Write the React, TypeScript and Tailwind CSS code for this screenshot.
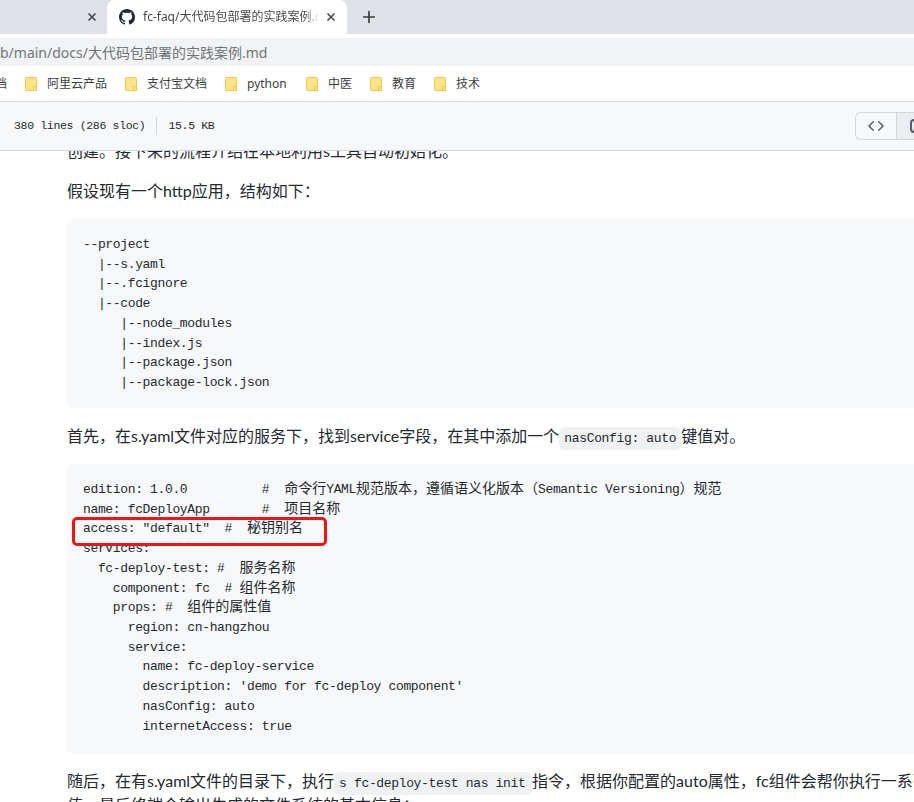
import React from "react";

const cjkRe = /([\u2E80-\u9FFF\uFF00-\uFFEF\u3000-\u303F]+)/;

function Mono({ text }: { text: string }) {
  return (
    <>
      {text.split(cjkRe).map((part, i) =>
        i % 2 === 1 ? (
          <span key={i} className="font-['Noto_Sans_CJK_SC',sans-serif] text-[14px] leading-[0] tracking-normal">
            {part}
          </span>
        ) : (
          <span key={i}>{part}</span>
        )
      )}
    </>
  );
}

function CodeBlock({ lines, className, children }: { lines: string[]; className: string; children?: React.ReactNode }) {
  return (
    <div className={`relative w-[900px] rounded-md bg-[#f6f8fa] px-4 pt-[16px] ${className}`}>
      <pre className="font-['Liberation_Mono',monospace] text-[13px] leading-[19.72px] tracking-[-0.35px] text-[#24292f]">
        {lines.map((l, i) => (
          <div key={i} className="h-[19.72px] whitespace-pre">
            <Mono text={l} />
          </div>
        ))}
      </pre>
      {children}
    </div>
  );
}

function InlineCode({ children, className }: { children: string; className: string }) {
  return (
    <code className={`inline-block rounded-md bg-[#eff1f3] px-[5px] align-baseline font-['Liberation_Mono',monospace] text-[13px] leading-[23px] tracking-[-0.35px] ${className}`}>
      {children}
    </code>
  );
}

function Folder() {
  return (
    <svg width="12" height="14" viewBox="0 0 12 14" className="shrink-0">
      <rect x="0.5" y="0.5" width="11" height="13" rx="1" fill="#fee38d" stroke="#efc94c" />
      <rect x="8.5" y="9.5" width="3" height="4" fill="#fee38d" stroke="#efc94c" />
    </svg>
  );
}

function Bookmark({ label, width }: { label: string; width: string }) {
  return (
    <div className={`flex items-center gap-[10px] ${width}`}>
      <Folder />
      <span className="whitespace-nowrap text-[12px] text-[#3c4043]">{label}</span>
    </div>
  );
}

function Close({ className }: { className: string }) {
  return (
    <svg width="10" height="10" viewBox="0 0 10 10" className={className}>
      <path d="M1.5 1.5l7 7M8.5 1.5l-7 7" stroke="#45484c" strokeWidth="1.6" />
    </svg>
  );
}

const projectLines = [
  "--project",
  "  |--s.yaml",
  "  |--.fcignore",
  "  |--code",
  "     |--node_modules",
  "     |--index.js",
  "     |--package.json",
  "     |--package-lock.json",
];

const yamlLines = [
  "edition: 1.0.0          #  命令行YAML规范版本，遵循语义化版本（Semantic Versioning）规范",
  "name: fcDeployApp       #  项目名称",
  'access: "default"  #  秘钥别名',
  "services:",
  "  fc-deploy-test: #  服务名称",
  "    component: fc  # 组件名称",
  "    props: #  组件的属性值",
  "      region: cn-hangzhou",
  "      service:",
  "        name: fc-deploy-service",
  "        description: 'demo for fc-deploy component'",
  "        nasConfig: auto",
  "        internetAccess: true",
];

export default function App() {
  return (
    <div className="flex h-[802px] w-[914px] flex-col overflow-hidden bg-white font-['Noto_Sans','Noto_Sans_CJK_SC',sans-serif]">
      <div className="flex h-[34px] shrink-0 bg-[#dee1e6]">
        <div className="flex w-[107px] shrink-0 items-center justify-end pr-[10px]">
          <Close className="mr-0" />
        </div>
        <div className="flex w-[240px] shrink-0 items-center rounded-t-lg bg-white pl-[12px] pr-[11px]">
          <svg width="16" height="16" viewBox="0 0 16 16" className="shrink-0 fill-[#24292f]">
            <path d="M8 0C3.58 0 0 3.58 0 8c0 3.54 2.29 6.53 5.47 7.59.4.07.55-.17.55-.38 0-.19-.01-.82-.01-1.49-2.01.37-2.53-.49-2.69-.94-.09-.23-.48-.94-.82-1.13-.28-.15-.68-.52-.01-.53.63-.01 1.08.58 1.23.82.72 1.21 1.87.87 2.33.66.07-.52.28-.87.51-1.07-1.78-.2-3.64-.89-3.64-3.95 0-.87.31-1.59.82-2.15-.08-.2-.36-1.02.08-2.12 0 0 .67-.21 2.2.82.64-.18 1.32-.27 2-.27.68 0 1.36.09 2 .27 1.53-1.04 2.2-.82 2.2-.82.44 1.1.16 1.92.08 2.12.51.56.82 1.27.82 2.15 0 3.07-1.87 3.75-3.65 3.95.29.25.54.73.54 1.48 0 1.07-.01 1.93-.01 2.2 0 .21.15.46.55.38A8.013 8.013 0 0016 8c0-4.42-3.58-8-8-8z" />
          </svg>
          <span className="ml-[8px] w-[176px] overflow-hidden whitespace-nowrap text-[12px] text-[#45484c] [mask-image:linear-gradient(to_right,black_92%,transparent)]">fc-faq/大代码包部署的实践案例.md</span>
          <Close className="ml-auto" />
        </div>
        <svg width="14" height="14" viewBox="0 0 14 14" className="ml-[15px] mt-[10px] shrink-0">
          <path d="M7 1v12M1 7h12" stroke="#3c4043" strokeWidth="1.7" />
        </svg>
      </div>
      <div className="h-[4px] shrink-0 bg-white" />
      <div className="flex h-[28px] shrink-0 items-center bg-[#f1f3f4] text-[14px] text-[#70757a]">
        <span className="whitespace-nowrap">b/main/docs/大代码包部署的实践案例.md</span>
      </div>
      <div className="flex h-[36px] shrink-0 items-center overflow-hidden border-b border-[#d8dadf] text-[12px]">
        <span className="ml-[-5px] w-[30px] shrink-0 whitespace-nowrap text-[#3c4043]">档</span>
        <div className="flex items-center">
          <Bookmark label="阿里云产品" width="w-[100px]" />
          <Bookmark label="支付宝文档" width="w-[100px]" />
          <Bookmark label="python" width="w-[81px]" />
          <Bookmark label="中医" width="w-[64px]" />
          <Bookmark label="教育" width="w-[64px]" />
          <Bookmark label="技术" width="w-[64px]" />
        </div>
      </div>
      <div className="flex h-[49px] shrink-0 items-center border-b border-[#d0d7de] bg-[#f6f8fa] pl-[14px]">
        <span className="whitespace-nowrap font-['Liberation_Mono',monospace] text-[11.5px] leading-[18px] tracking-[-0.33px] text-[#24292f]">380 lines (286 sloc)</span>
        <span className="mx-[11px] h-[18px] w-px bg-[#d0d7de]" />
        <span className="whitespace-nowrap font-['Liberation_Mono',monospace] text-[11.5px] tracking-[-0.33px] text-[#24292f]">15.5 KB</span>
        <div className="ml-auto flex h-[28px] w-[59px] shrink-0 overflow-hidden rounded-l-md border border-r-0 border-[#d0d7de]">
          <div className="flex w-[41px] shrink-0 items-center justify-center border-r border-[#d0d7de]">
            <svg width="16" height="16" viewBox="0 0 16 16" className="fill-[#57606a]">
              <path d="M11.28 3.22l4.25 4.25a.75.75 0 010 1.06l-4.25 4.25a.75.75 0 01-1.06-1.06L13.94 8l-3.72-3.72a.75.75 0 011.06-1.06zm-6.56 0a.75.75 0 011.06 1.06L2.06 8l3.72 3.72a.75.75 0 01-1.06 1.06L.47 8.53a.75.75 0 010-1.06l4.25-4.25z" />
            </svg>
          </div>
          <div className="flex-1 bg-[#ebedf0] pl-[13px] pt-[6px]">
            <div className="h-[14px] w-[8px] rounded-l-sm border-2 border-r-0 border-[#57606a]" />
          </div>
        </div>
      </div>
      <div className="min-h-0 flex-1 overflow-hidden pl-[67px] font-['Lato','Noto_Sans_CJK_SC',sans-serif] text-[16px] text-[#24292f]">
        <p className="mt-[-12px] h-[24px] whitespace-nowrap leading-[24px]">创建。接下来的流程介绍在本地利用s工具自动初始化。</p>
        <p className="mt-[16px] h-[24px] whitespace-nowrap leading-[24px]">假设现有一个http应用，结构如下：</p>
        <CodeBlock lines={projectLines} className="mt-[16px] h-[189px]" />
        <p className="mt-[16px] h-[24px] whitespace-nowrap leading-[24px]">
          首先，在s.yaml文件对应的服务下，找到service字段，在其中添加一个
          <InlineCode className="w-[122px]">nasConfig: auto</InlineCode>
          键值对。
        </p>
        <CodeBlock lines={yamlLines} className="mt-[16px] h-[289px]">
          <div className="pointer-events-none absolute left-[5px] top-[53px] h-[29px] w-[255px] rounded-[5px] border-[3px] border-[#f01414]" />
        </CodeBlock>
        <p className="mt-[16px] h-[24px] whitespace-nowrap leading-[24px]">
          随后，在有s.yaml文件的目录下，执行
          <InlineCode className="w-[198px]">s fc-deploy-test nas init</InlineCode>
          指令，根据你配置的auto属性，fc组件会帮你执行一系列操作
        </p>
        <p className="h-[24px] whitespace-nowrap leading-[24px]">值，最后终端会输出生成的文件系统的基本信息：</p>
      </div>
    </div>
  );
}
